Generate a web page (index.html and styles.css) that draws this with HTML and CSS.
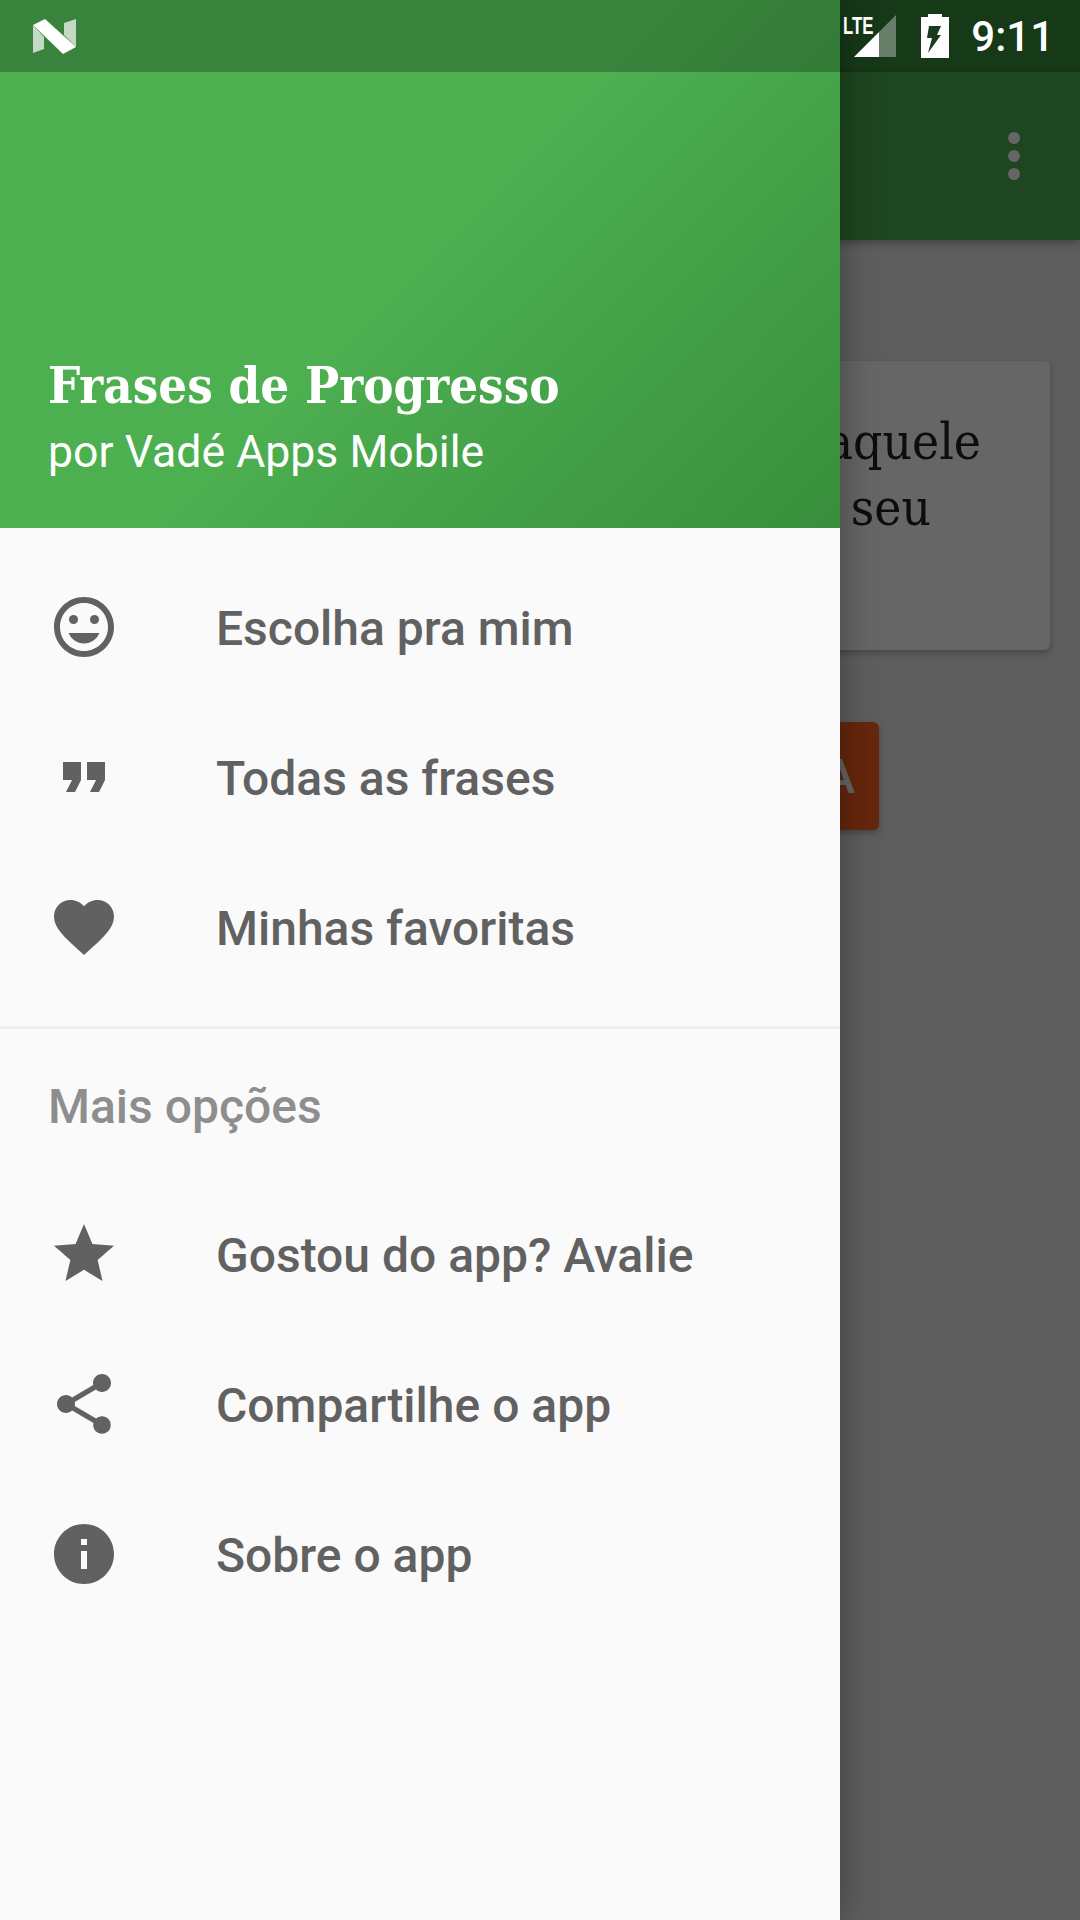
FILE: index.html
```html
<!DOCTYPE html>
<html lang="en">
<head>
    <meta charset="UTF-8">
    <meta name="viewport" content="width=device-width, initial-scale=1.0">
    <title>Frases de Progresso</title>
    <link rel="stylesheet" href="styles.css">
</head>
<body>
    <div class="screen">
        <!-- App behind the drawer -->
        <div class="app">
            <div class="app-status"></div>
            <div class="app-bar">
                <div class="more-dots"><span></span><span></span><span></span></div>
            </div>
            <div class="quote-card">
                <div class="quote-line">aquele</div>
                <div class="quote-line quote-line-short">seu</div>
            </div>
            <div class="action-button">A</div>
        </div>
        <div class="scrim"></div>

        <!-- Drawer -->
        <div class="drawer">
            <div class="drawer-header">
                <div class="drawer-title">Frases de Progresso</div>
                <div class="drawer-subtitle">por Vadé Apps Mobile</div>
            </div>
            <div class="menu-group">
                <div class="menu-item">
                    <svg class="menu-icon" viewBox="0 0 24 24"><path d="M11.99 2C6.47 2 2 6.48 2 12s4.47 10 9.99 10C17.52 22 22 17.52 22 12S17.52 2 11.99 2zM12 20c-4.42 0-8-3.58-8-8s3.58-8 8-8 8 3.58 8 8-3.58 8-8 8z"/><circle cx="15.5" cy="9.5" r="1.5"/><circle cx="8.5" cy="9.5" r="1.5"/><path d="M12 17.5c2.33 0 4.31-1.46 5.11-3.5H6.89c.8 2.04 2.78 3.5 5.11 3.5z"/></svg>
                    <span>Escolha pra mim</span>
                </div>
                <div class="menu-item">
                    <svg class="menu-icon" viewBox="0 0 24 24"><path d="M6 17h3l2-4V7H5v6h3zm8 0h3l2-4V7h-6v6h3z"/></svg>
                    <span>Todas as frases</span>
                </div>
                <div class="menu-item">
                    <svg class="menu-icon" viewBox="0 0 24 24"><path d="M12 21.35l-1.45-1.32C5.4 15.36 2 12.28 2 8.5 2 5.42 4.42 3 7.5 3c1.74 0 3.41.81 4.5 2.09C13.09 3.81 14.76 3 16.5 3 19.58 3 22 5.42 22 8.5c0 3.78-3.4 6.86-8.55 11.54L12 21.35z"/></svg>
                    <span>Minhas favoritas</span>
                </div>
            </div>
            <hr class="menu-divider">
            <div class="menu-subheader">Mais opções</div>
            <div class="menu-group">
                <div class="menu-item">
                    <svg class="menu-icon" viewBox="0 0 24 24"><path d="M12 17.27L18.18 21l-1.64-7.03L22 9.24l-7.19-.61L12 2 9.19 8.63 2 9.24l5.46 4.73L5.82 21z"/></svg>
                    <span>Gostou do app? Avalie</span>
                </div>
                <div class="menu-item">
                    <svg class="menu-icon" viewBox="0 0 24 24"><path d="M18 16.08c-.76 0-1.44.3-1.96.77L8.91 12.7c.05-.23.09-.46.09-.7s-.04-.47-.09-.7l7.05-4.11c.54.5 1.25.81 2.04.81 1.66 0 3-1.34 3-3s-1.34-3-3-3-3 1.34-3 3c0 .24.04.47.09.7L8.04 9.81C7.5 9.31 6.79 9 6 9c-1.66 0-3 1.34-3 3s1.34 3 3 3c.79 0 1.5-.31 2.04-.81l7.12 4.16c-.05.21-.08.43-.08.65 0 1.61 1.31 2.92 2.92 2.92 1.61 0 2.92-1.31 2.92-2.92s-1.31-2.92-2.92-2.92z"/></svg>
                    <span>Compartilhe o app</span>
                </div>
                <div class="menu-item">
                    <svg class="menu-icon" viewBox="0 0 24 24"><path d="M12 2C6.48 2 2 6.48 2 12s4.48 10 10 10 10-4.48 10-10S17.52 2 12 2zm1 15h-2v-6h2v6zm0-8h-2V7h2v2z"/></svg>
                    <span>Sobre o app</span>
                </div>
            </div>
        </div>

        <!-- Status bar sits over everything -->
        <div class="status-bar">
            <div class="status-tint"></div>
            <svg class="status-logo" viewBox="0 0 43 35">
                <path class="logo-fade" d="M0 6V34L11 30V18z"/>
                <path class="logo-fade" d="M43 0V28L31 16V4z"/>
                <path class="logo-solid" d="M0 6L12 0L43 28L30 35z"/>
            </svg>
            <div class="status-right">
                <div class="signal">
                    <span class="lte">LTE</span>
                    <svg class="signal-icon" viewBox="0 0 42 42">
                        <path class="signal-fade" d="M42 0V42H25V17z"/>
                        <path class="logo-solid" d="M25 17V42H0z"/>
                    </svg>
                </div>
                <svg class="battery-icon" viewBox="0 0 28 44">
                    <path class="logo-solid" d="M7 0H21V3H28V44H0V3H7z"/>
                    <path class="bolt" d="M8 12H20L16 21H20L7 39L11 24H6z"/>
                </svg>
                <span class="clock">9:11</span>
            </div>
        </div>
    </div>
</body>
</html>
```

FILE: styles.css
```css
* {
    box-sizing: border-box;
}
body {
    margin: 0;
    font-family: Roboto, sans-serif;
}
.screen {
    width: 1080px;
    height: 1920px;
    position: relative;
    overflow: hidden;
    background-color: #fafafa;
}

/* App behind the drawer */
.app {
    height: 100%;
    background-color: #eaeaea;
}
.app-status {
    height: 72px;
    background-color: #388e3c;
}
.app-bar {
    height: 168px;
    display: flex;
    justify-content: flex-end;
    align-items: center;
    padding-right: 60px;
    background-color: #4caf50;
    box-shadow: 0 3px 8px rgba(0, 0, 0, 0.3);
}
.more-dots {
    display: flex;
    flex-direction: column;
    gap: 6px;
}
.more-dots span {
    width: 12px;
    height: 12px;
    border-radius: 50%;
    background-color: #ffffff;
}
.quote-card {
    margin: 121px 30px 0;
    height: 289px;
    padding: 48px 69px 0 0;
    border-radius: 6px;
    background-color: #ffffff;
    box-shadow: 0 3px 6px rgba(0, 0, 0, 0.25);
    font-family: "DejaVu Serif Condensed", "DejaVu Serif", serif;
    font-size: 51px;
    line-height: 66px;
    color: #212121;
    text-align: right;
}
.quote-line-short {
    padding-right: 50px;
}
.action-button {
    margin: 72px 0 0 201px;
    width: 678px;
    height: 108px;
    padding-right: 24px;
    display: flex;
    justify-content: flex-end;
    align-items: center;
    border-radius: 6px;
    background-color: #ff6222;
    box-shadow: 0 3px 6px rgba(0, 0, 0, 0.25);
    font-size: 48px;
    font-weight: 500;
    color: #ffffff;
}
.scrim {
    position: absolute;
    inset: 0;
    background-color: rgba(0, 0, 0, 0.6);
}

/* Drawer */
.drawer {
    position: absolute;
    left: 0;
    top: 0;
    bottom: 0;
    width: 840px;
    background-color: #fafafa;
    box-shadow: 0 0 36px rgba(0, 0, 0, 0.35);
}
.drawer-header {
    height: 528px;
    padding: 0 48px 46px;
    display: flex;
    flex-direction: column;
    justify-content: flex-end;
    background: linear-gradient(135deg, #4caf50 0%, #4caf50 50%, #388e3c 100%);
    color: #ffffff;
}
.drawer-title {
    font-family: "DejaVu Serif Condensed", "DejaVu Serif", serif;
    font-weight: bold;
    font-size: 50.5px;
    line-height: 72px;
}
.drawer-subtitle {
    font-size: 44.6px;
    line-height: 60px;
}
.menu-group {
    padding-top: 25px;
}
.menu-item {
    height: 150px;
    padding-left: 48px;
    display: flex;
    align-items: center;
    font-size: 48px;
    font-weight: 500;
    color: #616161;
}
.menu-icon {
    width: 72px;
    height: 72px;
    margin-right: 96px;
    margin-bottom: 2px;
    fill: #616161;
    flex-shrink: 0;
}
.menu-divider {
    border: none;
    border-top: 3px solid #eeeeee;
    margin: 23px 0 0;
}
.menu-subheader {
    height: 151px;
    padding: 3px 0 0 48px;
    display: flex;
    align-items: center;
    font-size: 48px;
    font-weight: 500;
    color: #8e8e8e;
}
.menu-subheader + .menu-group {
    padding-top: 0;
}

/* Status bar */
.status-bar {
    position: absolute;
    left: 0;
    top: 0;
    width: 100%;
    height: 72px;
    display: flex;
    justify-content: space-between;
    align-items: center;
    padding: 0 26px 0 33px;
}
.status-tint {
    position: absolute;
    left: 0;
    top: 0;
    width: 840px;
    height: 72px;
    background-color: rgba(0, 0, 0, 0.25);
}
.status-logo {
    position: relative;
    width: 43px;
    height: 35px;
}
.logo-solid {
    fill: #ffffff;
}
.logo-fade {
    fill: rgba(255, 255, 255, 0.7);
}
.signal-fade {
    fill: rgba(255, 255, 255, 0.35);
}
.status-right {
    position: relative;
    display: flex;
    align-items: center;
}
.signal {
    position: relative;
    width: 42px;
    height: 42px;
    margin-right: 25px;
}
.lte {
    position: absolute;
    left: -11px;
    top: -1px;
    font-family: "Liberation Sans Narrow", "Liberation Sans", sans-serif;
    font-weight: bold;
    font-size: 24px;
    line-height: 24px;
    color: #ffffff;
    transform: scaleX(0.7);
    transform-origin: left top;
}
.signal-icon {
    position: absolute;
    left: 0;
    top: 0;
    width: 42px;
    height: 42px;
}
.battery-icon {
    width: 28px;
    height: 44px;
    margin-right: 22px;
}
.bolt {
    fill: #1a3b1c;
}
.clock {
    font-size: 42px;
    font-weight: 500;
    color: #ffffff;
}
```
